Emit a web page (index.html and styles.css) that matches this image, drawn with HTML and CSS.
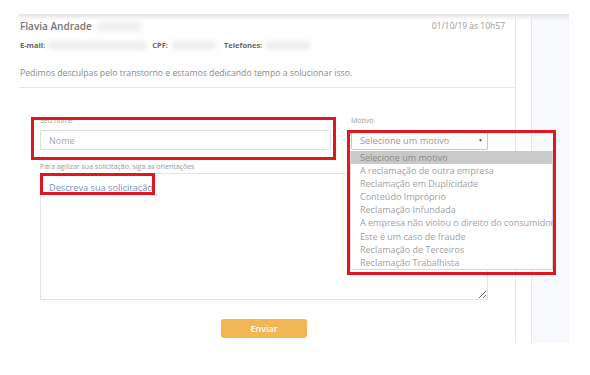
FILE: index.html
```html
<!DOCTYPE html>
<html lang="pt-BR">
<head>
    <meta charset="UTF-8">
    <title>Reclamação</title>
    <link rel="stylesheet" href="styles.css">
</head>
<body>
    <div class="page">
        <div class="main col">
            <div class="head">
                <div class="head-row">
                    <h2 class="name">Flavia Andrade <span class="blur blur-name"></span></h2>
                    <span class="date">01/10/19 às 10h57</span>
                </div>
                <div class="info-row">
                    <b>E-mail:</b><span class="blur blur-mail"></span>
                    <b>CPF:</b><span class="blur blur-cpf"></span>
                    <b>Telefones:</b><span class="blur blur-tel"></span>
                </div>
                <p class="apology">Pedimos desculpas pelo transtorno e estamos dedicando tempo a solucionar isso.</p>
            </div>

            <form class="form">
                <div class="top-fields">
                    <div class="field field-name">
                        <label for="nome">Seu nome</label>
                        <input type="text" id="nome" placeholder="Nome">
                        <span class="mark mark-name"></span>
                    </div>
                    <div class="field field-motivo">
                        <label>Motivo</label>
                        <div class="select">Selecione um motivo <span class="arrow">▼</span></div>
                        <ul class="options">
                            <li class="active">Selecione um motivo</li>
                            <li>A reclamação de outra empresa</li>
                            <li>Reclamação em Duplicidade</li>
                            <li>Conteúdo Impróprio</li>
                            <li>Reclamação Infundada</li>
                            <li>A empresa não violou o direito do consumidor</li>
                            <li>Este é um caso de fraude</li>
                            <li>Reclamação de Terceiros</li>
                            <li>Reclamação Trabalhista</li>
                        </ul>
                        <span class="mark mark-motivo"></span>
                    </div>
                </div>

                <div class="field field-text">
                    <label for="desc">Para agilizar sua solicitação, siga as orientações</label>
                    <div class="text-wrap">
                        <textarea id="desc" placeholder="Descreva sua solicitação"></textarea>
                        <span class="mark mark-desc"></span>
                    </div>
                </div>

                <div class="actions">
                    <button type="button" class="send-btn">Enviar</button>
                </div>
            </form>
        </div>
        <div class="gap col"></div>
        <div class="side col"></div>
    </div>
</body>
</html>
```

FILE: styles.css
```css
* {
    margin: 0;
    padding: 0;
    box-sizing: border-box;
    font-family: "Open Sans", "Liberation Sans", sans-serif;
}

body {
    background: #fff;
    width: 590px;
    height: 375px;
    overflow: hidden;
}

.page {
    display: flex;
    padding: 14px 0 0 19px;
    height: 343px;
}

.col {
    background-image: linear-gradient(#e3e3e3, rgba(255, 255, 255, 0) 6px);
}

.main {
    width: 497px;
    border-right: 1px solid #e8e8e8;
    background-color: #fff;
}

.gap {
    width: 16px;
    border-right: 1px solid #e8e8e8;
    background-color: #fff;
}

.side {
    width: 37px;
    background-color: #f8f9fc;
}

/* Cabeçalho */
.head {
    height: 74px;
    border-bottom: 1px solid #e6e6e6;
    padding: 5px 10px 0 1px;
}

.head-row {
    display: flex;
    justify-content: space-between;
    align-items: center;
    line-height: 14px;
}

.name {
    font-size: 10px;
    font-weight: 600;
    color: #757575;
    display: flex;
    align-items: center;
}

.date {
    font-size: 8.5px;
    color: #9a9a9a;
}

.info-row {
    display: flex;
    align-items: center;
    margin-top: 7px;
    line-height: 11px;
    font-size: 7.5px;
    color: #666;
}

.info-row b {
    font-weight: 700;
}

.blur {
    display: inline-block;
    height: 9px;
    background: #eeeeee;
    filter: blur(2px);
}

.blur-name { width: 44px; height: 11px; margin-left: 5px; background: #f1f1f1; }
.blur-mail { width: 98px; margin: 0 6px 0 3px; }
.blur-cpf { width: 44px; margin: 0 8px 0 4px; }
.blur-tel { width: 44px; margin-left: 4px; }

.apology {
    margin-top: 16px;
    font-size: 8.7px;
    line-height: 12px;
    color: #8a8a8a;
}

/* Formulário */
.form {
    width: 469px;
    padding: 28px 0 0 21px;
}

.top-fields {
    display: flex;
    gap: 20px;
}

.field {
    position: relative;
    display: flex;
    flex-direction: column;
}

.field label {
    font-size: 7px;
    line-height: 10px;
    color: #999;
    margin-bottom: 4px;
}

.field-name {
    width: 291px;
}

.field-motivo {
    width: 137px;
}

.field input,
.select {
    height: 20px;
    border: 1px solid #dedede;
    border-radius: 2px;
    padding: 0 8px;
    font-size: 9px;
    color: #999;
    outline: none;
}

.field input::placeholder {
    color: #a5a5a5;
}

.select {
    display: flex;
    align-items: center;
    justify-content: space-between;
    border-color: #a9cfe4;
    padding-right: 4px;
    color: #9a9a9a;
    font-size: 9.2px;
}

.arrow {
    font-size: 5px;
    color: #555;
}

.options {
    position: absolute;
    top: 35px;
    left: -1px;
    width: 203px;
    list-style: none;
    background: #fff;
    border: 1px solid #d6d6e0;
    border-top: none;
    z-index: 2;
}

.options li {
    height: 13.1px;
    line-height: 13.1px;
    padding-left: 9px;
    font-size: 9px;
    color: #a2a2a2;
    white-space: nowrap;
}

.options li.active {
    background: #c9c9c9;
    color: #8a8a8a;
}

.field-text {
    width: 448px;
    margin-top: 12px;
}

.field-text label {
    margin-bottom: 1px;
}

.text-wrap {
    position: relative;
    display: flex;
}

.text-wrap textarea {
    width: 448px;
    height: 127px;
    border: 1px solid #e3e3e3;
    padding: 7px 8px;
    font-size: 9.2px;
    outline: none;
    resize: both;
}

.text-wrap textarea::placeholder {
    color: #7396c4;
}

.actions {
    display: flex;
    justify-content: center;
    width: 448px;
    margin-top: 19px;
}

.send-btn {
    width: 86px;
    height: 19px;
    border: none;
    border-radius: 3px;
    background: #f2b654;
    color: #fff;
    font-size: 9px;
    font-weight: 600;
}

/* Marcações em vermelho */
.mark {
    position: absolute;
    border: 3px solid #e01620;
    z-index: 3;
    pointer-events: none;
}

.mark-name {
    top: 1px;
    left: -9px;
    width: 305px;
    height: 43px;
}

.mark-motivo {
    top: 14px;
    left: -4px;
    width: 209px;
    height: 145px;
}

.mark-desc {
    top: 0;
    left: 0;
    width: 115px;
    height: 22px;
}
```
